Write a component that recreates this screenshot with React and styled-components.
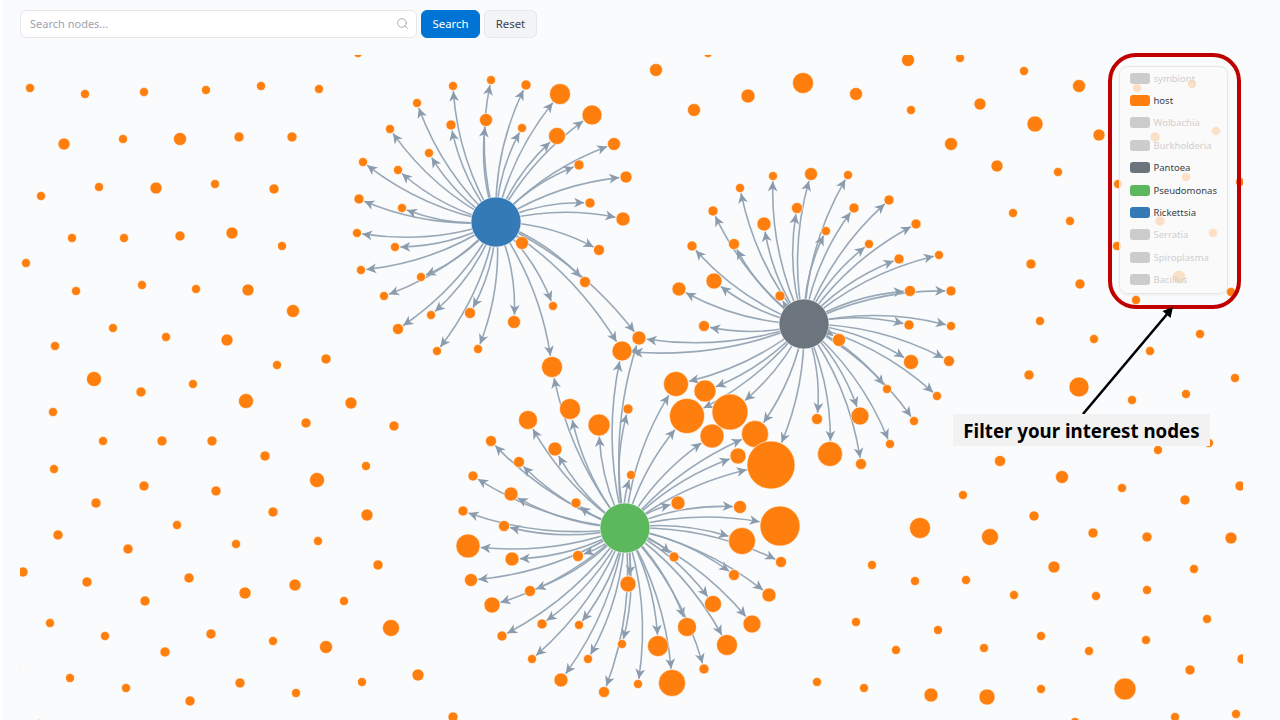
import React from 'react';
import styled, { createGlobalStyle } from 'styled-components';
import { Search } from 'lucide-react';

const Global = createGlobalStyle`
  html, body { margin: 0; padding: 0; background: #fff; height: 720px; overflow: hidden; }
  * { box-sizing: border-box; }
`;

const Page = styled.div`
  margin-left: 3px;
  height: 720px;
  background: #f9fbfc;
  font-family: "Noto Sans", "Open Sans", sans-serif;
  display: flex;
  flex-direction: column;
`;
const Toolbar = styled.div`
  display: flex;
  gap: 4px;
  padding: 10px 0 0 17px;
  height: 52px;
  flex: none;
  align-items: flex-start;
`;
const SearchBox = styled.div`
  width: 397px;
  height: 28px;
  background: #fff;
  border: 1px solid #e5e7eb;
  border-radius: 6px;
  display: flex;
  align-items: center;
  justify-content: space-between;
  padding: 0 7px 2px 9px;
  color: #9ca3af;
`;
const SearchInput = styled.input`
  border: 0;
  outline: 0;
  flex: 1;
  padding: 0;
  font: 400 11px "Noto Sans", sans-serif;
  background: transparent;
  color: #374151;
  &::placeholder { color: #9ca3af; opacity: 1; }
`;
const Button = styled.button`
  height: 28px;
  width: ${p => p.$w}px;
  padding: 0 0 2px;
  border-radius: 6px;
  font: 400 11.4px "Noto Sans", sans-serif;
  border: 1px solid ${p => (p.$primary ? '#0074d4' : '#e5e7eb')};
  background: ${p => (p.$primary ? '#0074d4' : '#f3f4f6')};
  color: ${p => (p.$primary ? '#fff' : '#374151')};
`;
const Stage = styled.div`
  position: relative;
  margin: 3px 0 0 17px;
  width: 1223px;
  height: 665px;
`;
const Graph = styled.svg`
  display: block;
  width: 1223px;
  height: 665px;
`;
const Edge = styled.path`
  fill: none;
  stroke: #94a3b3;
  stroke-width: 1.6;
  stroke-opacity: 0.95;
`;
const Dot = styled.circle`
  fill: ${p => p.$fill || '#ff7f0e'};
  stroke: #fff;
  stroke-opacity: 0.55;
  stroke-width: 1;
`;
const Legend = styled.div`
  position: absolute;
  left: 1099px;
  top: 11px;
  width: 109px;
  height: 228px;
  padding: 0 0 0 10px;
  background: rgba(250, 250, 250, 0.78);
  border: 1px solid #e6e7e8;
  border-radius: 8px;
  box-shadow: 0 1px 3px rgba(0, 0, 0, 0.06);
  display: flex;
  flex-direction: column;
`;
const LegendItem = styled.div`
  height: 22.4px;
  display: flex;
  align-items: center;
  gap: 3.5px;
  font-size: 9.5px;
  color: ${p => (p.$off ? '#cfcfcf' : '#3a3f44')};
  white-space: nowrap;
`;
const Swatch = styled.span`
  width: 20px;
  height: 11px;
  border-radius: 3px;
  background: ${p => p.$color};
  flex: none;
`;
const Frame = styled.div`
  position: absolute;
  left: 1088px;
  top: -2px;
  width: 133px;
  height: 256px;
  border: 4.5px solid #c00000;
  border-radius: 28px;
  pointer-events: none;
`;
const Callout = styled.div`
  position: absolute;
  left: 933px;
  top: 359px;
  width: 257px;
  height: 32px;
  background: #f2f2f2;
  color: #000;
  font: 700 18.7px "Noto Sans", sans-serif;
  display: flex;
  align-items: center;
  justify-content: center;
`;
const Overlay = styled.svg`
  position: absolute;
  left: 0;
  top: 0;
  width: 1223px;
  height: 665px;
  pointer-events: none;
`;

const hubA = [496, 222, 25, '#337ab7'];
const hubB = [804, 324, 25, '#6c757d'];
const hubC = [625, 528, 25, '#5cb85c'];

const childrenA = [
  [491,80,4.5],[453,86,4.5],[526,85,5],[560,94,10.5],[417,103,4.5],[592,115,10],[390,129,4.5],[451,125,5],[486,120,6.5],[522,128,4.5],
  [557,136,8.5],[614,144,6.5],[429,153,4.5],[579,165,5],[363,162,4.5],[626,177,6],[398,170,4.5],[359,199,5],[402,208,4.5],[590,203,5],
  [623,219,7],[357,233,4.5],[395,247,4.5],[522,243,6.5],[599,250,5.5],[361,270,4.5],[421,277,4.5],[384,296,4.5],[585,282,5.5],[431,315,4.5],
  [470,313,5.5],[553,306,4.5],[398,329,5.5],[514,322,6.5],[478,349,4.5],[437,351,4.5],[552,367,10.5],[639,338,7],[622,351,10],
];
const childrenB = [
  [811,174,6.5],[773,176,4.5],[848,175,4.5],[740,188,4.5],[889,200,5],[713,211,5],[797,208,5.5],[854,208,5],[764,224,7],[916,224,5],
  [826,231,4.5],[692,246,5],[734,244,5.5],[869,244,4.5],[939,255,4.5],[899,259,5],[714,281,8],[679,289,7],[910,291,5.5],[951,291,5],
  [780,296,5],[704,326,5.5],[909,325,5],[951,326,4.5],[639,338,7],[622,351,10],[839,340,6.5],[911,362,7.5],[949,361,5.5],[937,396,4.5],
  [887,389,4.5],[914,421,4.5],[860,416,9],[817,419,5.5],[890,444,4.5],[830,454,12.5],[861,464,5.5],
  [676,384,12.5],[705,391,11],[687,416,17.5],[730,412,18],[755,434,13.5],[771,465,24],
];
const childrenC = [
  [552,367,10.5],[570,409,10.5],[528,420,9.5],[599,425,11],[628,409,5],[491,441,5.5],[555,449,7],[519,462,5.5],[473,476,5],[631,475,4.5],
  [576,503,5],[511,494,7],[463,511,5],[504,526,5.5],[678,503,7],[740,507,6.5],[780,526,20],[468,546,12],[742,541,13.5],[578,556,5.5],
  [512,559,7],[674,557,5],[781,562,5.5],[471,580,6.5],[734,575,5.5],[628,584,8],[530,591,5.5],[769,595,7],[492,605,8],[713,604,8.5],
  [542,624,5],[579,625,4.5],[502,636,5],[752,624,9],[687,627,9.5],[622,644,4.5],[727,645,10.5],[658,646,10.5],[532,659,4.5],[588,659,4.5],
  [704,669,5],[561,680,7],[638,684,4.5],[672,683,13.5],[604,692,5.5],
  [676,384,12.5],[687,416,17.5],[712,436,12],[755,434,13.5],[738,456,8],[771,465,24],[639,338,7],[622,351,10],
];
const free = [
  [30,88,4.5],[85,94,4.5],[144,92,4.5],[206,90,4.5],[261,86,4.5],[319,89,4.5],[358,53,4.5],[64,144,6],[123,139,4.5],[180,139,6.5],
  [239,137,5],[292,137,5],[41,196,4.5],[99,187,4.5],[156,188,6],[215,184,4.5],[274,189,5],[72,238,4.5],[124,238,4.5],[180,236,5],
  [232,233,6],[282,246,4.5],[26,263,4.5],[76,291,4.5],[142,285,4.5],[196,289,4.5],[248,290,6],[293,311,6.5],[113,328,4.5],[166,337,4.5],
  [227,340,6],[55,346,4.5],[277,365,4.5],[326,359,5],[94,379,7.5],[141,392,5],[193,384,4.5],[246,401,7.5],[351,403,6],[53,412,4.5],
  [306,423,5],[394,426,5],[103,441,4.5],[162,441,5],[212,441,5],[265,456,5],[366,466,4.5],[54,469,4.5],[317,480,7.5],[144,486,5],
  [216,491,5],[96,503,5],[273,512,5],[367,515,6],[177,525,4.5],[58,535,5],[128,549,5],[236,544,4.5],[318,541,4.5],[23,572,5],
  [378,565,5],[87,582,5],[189,578,5],[295,585,6],[245,593,6],[145,601,5],[344,601,4.5],[50,623,4.5],[105,636,4.5],[211,634,5],
  [273,641,4.5],[326,647,6.5],[391,628,8.5],[165,652,5],[70,678,4.5],[126,688,4.5],[240,683,5],[296,693,4.5],[362,682,4.5],[418,675,6],
  [190,701,5],[453,717,5],[39,724,4.5],[15.5,668,4.7],
  [656,70,6.5],[708,53,4.5],[803,83,10.5],[748,96,7],[694,110,6.5],[856,94,6.5],[908,60,6.5],[960,58,4.5],[1024,71,4.5],[1079,86,6.5],
  [911,110,4.5],[980,104,6],[1035,124,8],[1099,135,6],[951,144,6.5],[997,166,6],[1058,172,4.5],[1013,213,4.5],[1070,221,4.5],[1031,264,5],
  [1080,284,5],[1040,321,4.5],[1094,339,4.5],[1029,375,5],[1079,387,10],[1150,351,4.5],[1200,334,4.5],[1235,378,4.5],[1118,184,4.5],[1117,246,4.5],
  [1136,300,4.5],[1231,292,4.5],[1240,182,4.5],[1137,88,4.5],[1192,84,4.5],[1216,131,4.5],[1155,137,5],[1186,177,4.5],[1160,221,5],[1213,233,4.5],
  [1179,277,6.5],[1132,400,4.5],[1186,394,4.5],[1209,443,4.5],[1158,450,4.5],[1000,461,5.5],[1062,477,6.5],[963,495,4.5],[1122,488,4.5],[1185,500,5],
  [1240,486,5],[1034,516,5],[920,528,10.5],[990,537,8.5],[1093,533,5],[1147,537,5],[1231,538,6],[872,565,4.5],[915,581,4.5],[966,580,4.5],
  [1054,567,6],[1194,569,4.5],[1147,590,4.5],[1096,596,4.5],[1014,595,4.5],[1207,619,4.5],[856,622,4.5],[938,630,4.5],[1041,636,4.5],[896,650,4.5],
  [984,648,4.5],[1089,651,4.5],[1146,640,4.5],[1242,659,5],[1190,670,5],[817,682,4.5],[864,688,4.5],[931,695,7],[987,697,8],[1041,689,4.5],
  [1125,689,11],[1075,722,4.5],[1175,717,4.5],[1236,714,4.5],
];

function arcPath(hub, node) {
  const [sx, sy] = hub;
  const [tx, ty, r] = node;
  const dx = tx - sx, dy = ty - sy;
  const c = Math.hypot(dx, dy);
  const R = c * 2;
  const ux = dx / c, uy = dy / c;
  const h = Math.sqrt(R * R - (c * c) / 4);
  const cx = (sx + tx) / 2 - uy * h;
  const cy = (sy + ty) / 2 + ux * h;
  const a = Math.atan2(ty - cy, tx - cx) - (r + 0.8) / R;
  const ex = cx + R * Math.cos(a), ey = cy + R * Math.sin(a);
  return `M${sx},${sy} A${R.toFixed(1)},${R.toFixed(1)} 0 0 1 ${ex.toFixed(1)},${ey.toFixed(1)}`;
}

const groups = [[hubA, childrenA], [hubB, childrenB], [hubC, childrenC]];
const edges = groups.flatMap(([hub, kids]) => kids.map(k => arcPath(hub, k)));

const seen = new Set();
const nodes = [...free, ...childrenA, ...childrenB, ...childrenC].filter(n => {
  const key = n[0] + ',' + n[1];
  if (seen.has(key)) return false;
  seen.add(key);
  return true;
}).sort((a, b) => a[2] - b[2]);

const legend = [
  ['symbiont', null], ['host', '#ff7f0e'], ['Wolbachia', null], ['Burkholderia', null], ['Pantoea', '#6c757d'],
  ['Pseudomonas', '#5cb85c'], ['Rickettsia', '#337ab7'], ['Serratia', null], ['Spiroplasma', null], ['Bacillus', null],
];

export default function App() {
  return (
    <Page>
      <Global />
      <Toolbar>
        <SearchBox>
          <SearchInput placeholder="Search nodes..." />
          <Search size={13} strokeWidth={1.6} />
        </SearchBox>
        <Button $primary $w={59}>Search</Button>
        <Button $w={53}>Reset</Button>
      </Toolbar>
      <Stage>
        <Graph viewBox="20 55 1223 665">
          <defs>
            <marker id="tip" markerUnits="userSpaceOnUse" markerWidth="13" markerHeight="13" refX="11" refY="6.5" orient="auto">
              <path d="M1,1.6 L11,6.5 L1,11.4 L3.8,6.5 Z" fill="#8a9bad" />
            </marker>
          </defs>
          {edges.map((d, i) => <Edge key={i} d={d} markerEnd="url(#tip)" />)}
          {nodes.map(([x, y, r], i) => <Dot key={i} cx={x} cy={y} r={r} />)}
          {[hubA, hubB, hubC].map(([x, y, r, c]) => <Dot key={c} cx={x} cy={y} r={r} $fill={c} />)}
        </Graph>
        <Legend>
          {legend.map(([name, color]) => (
            <LegendItem key={name} $off={!color}>
              <Swatch $color={color || '#cccccc'} />
              {name}
            </LegendItem>
          ))}
        </Legend>
        <Frame />
        <Overlay viewBox="20 55 1223 665">
          <line x1="1083" y1="414" x2="1168" y2="313" stroke="#000" strokeWidth="2.6" />
          <path d="M1173,307 L1170.5,318 L1162.5,311 Z" fill="#000" />
        </Overlay>
        <Callout>Filter your interest nodes</Callout>
      </Stage>
    </Page>
  );
}
